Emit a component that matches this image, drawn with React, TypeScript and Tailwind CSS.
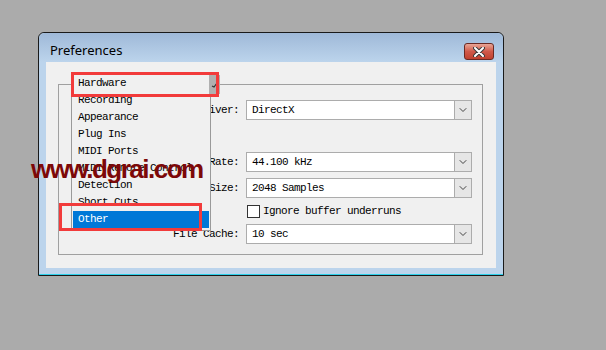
import { ChevronDown } from 'lucide-react';

const items = [
  'Hardware',
  'Recording',
  'Appearance',
  'Plug Ins',
  'MIDI Ports',
  'MIDI Remote Control',
  'Detection',
  'Short Cuts',
  'Other',
];

const mono = "font-['Liberation_Mono','DejaVu_Sans_Mono',monospace] text-[11px] tracking-[-0.6px]";

function Combo({ value }: { value: string }) {
  return (
    <div className="flex w-[226px] h-[20px] border border-[#acacac] bg-white">
      <div className={`flex-1 flex items-center pl-[5px] text-black ${mono}`}>{value}</div>
      <div className="w-[17px] flex items-center justify-center bg-[#e6e6e6] border-l border-[#acacac]">
        <ChevronDown className="h-3 w-3 text-[#444]" strokeWidth={2} />
      </div>
    </div>
  );
}

function Row({ label, children }: { label: string; children: React.ReactNode }) {
  return (
    <div className="flex items-center gap-[7px]">
      <div className={`w-[180px] text-right text-black ${mono}`}>{label}</div>
      {children}
    </div>
  );
}

export default function App() {
  return (
    <div className="relative w-[606px] h-[350px] bg-[#ababab] overflow-hidden">
      {/* Window */}
      <div className="relative ml-[38px] mt-[32px] w-[466px] flex flex-col border border-[#1a1a1a] rounded-t-[6px] bg-[#bcd4ec]">
        {/* Title bar */}
        <div className="h-[29px] flex items-center justify-between pl-[11px] pr-[9px] rounded-t-[6px] bg-linear-to-b from-[#9fb9d8] to-[#bcd4ec]">
          <span className="font-['Noto_Sans',sans-serif] text-[13px] text-black mt-[6px]">Preferences</span>
          <div className="mt-[8px] w-[30px] h-[17px] rounded-[3px] border border-[#6b2a24] bg-linear-to-b from-[#e8a596] via-[#d0594a] to-[#c0412f] flex items-center justify-center">
            <svg width="12" height="10" viewBox="0 0 12 10">
              <path d="M2 1 L10 9 M10 1 L2 9" stroke="#3a3a3a" strokeWidth="4" strokeLinecap="round" />
              <path d="M2 1 L10 9 M10 1 L2 9" stroke="#ffffff" strokeWidth="2" strokeLinecap="round" />
            </svg>
          </div>
        </div>

        {/* Client area */}
        <div className="px-[7px]">
          <div className="h-[206px] bg-[#f0f0f0] pt-[22px] pl-[12px]">
            <div className="w-[425px] h-[171px] border border-[#a0a0a0] flex flex-col pt-[15px]">
              <Row label="Driver:">
                <Combo value="DirectX" />
              </Row>
              <div className="h-[32px]" />
              <Row label="Sample Rate:">
                <Combo value="44.100 kHz" />
              </Row>
              <div className="h-[6px]" />
              <Row label="Buffer Size:">
                <Combo value="2048 Samples" />
              </Row>
              <div className="h-[7px]" />
              <div className="flex items-center h-[13px] pl-[188px] gap-[3px]">
                <div className="w-[13px] h-[13px] border border-[#333] bg-white" />
                <span className={`text-black ${mono}`}>Ignore buffer underruns</span>
              </div>
              <div className="h-[6px]" />
              <Row label="File Cache:">
                <Combo value="10 sec" />
              </Row>
            </div>
          </div>
        </div>
        <div className="h-[6px]" />
        <div className="h-[1px] bg-[#2cd0ea]" />

        {/* Open dropdown list */}
        <div className="absolute left-[32px] top-[41px] w-[140px] border border-[#9a9a9a] bg-[#f0f0f0] flex flex-col">
          {items.map((it) => (
            <div
              key={it}
              className={`h-[17px] flex items-center pl-[5px] mx-[1px] ${mono} ${
                it === 'Other' ? 'bg-[#0078d7] text-white h-[15px] mb-[2px]' : 'text-black'
              }`}
            >
              {it}
            </div>
          ))}
        </div>
        <div className="absolute left-[170px] top-[42px] w-[11px] h-[19px] bg-[#b0b0b0] flex items-center justify-center">
          <svg width="7" height="6" viewBox="0 0 7 6">
            <path d="M1 4 L3 5 L6 1" stroke="#333" strokeWidth="1.2" fill="none" />
          </svg>
        </div>

        {/* Annotation boxes */}
        <div className="absolute left-[32px] top-[39px] w-[148px] h-[25px] border-[3px] border-[#f23b3b]" />
        <div className="absolute left-[20px] top-[170px] w-[143px] h-[28px] border-[3px] border-[#f23b3b]" />
      </div>

      {/* Watermark */}
      <div className="absolute left-[31px] top-[150px] font-['Liberation_Sans',Arial,sans-serif] font-bold text-[26px] tracking-[-1.5px] text-[#7d0808]">
        www.dgrai.com
      </div>
    </div>
  );
}
